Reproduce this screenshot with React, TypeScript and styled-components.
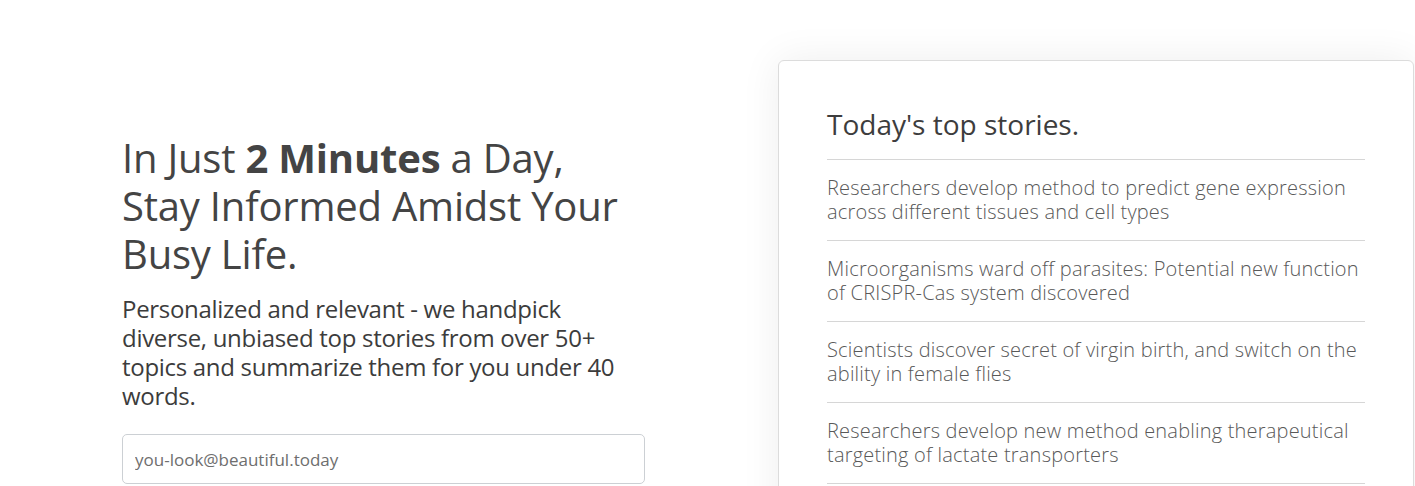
import React from 'react';
import styled, { createGlobalStyle } from 'styled-components';

const GlobalStyle = createGlobalStyle`
  html, body {
    margin: 0;
    padding: 0;
    background: #fff;
    font-family: 'Open Sans', 'Lato', sans-serif;
    color: #444;
  }
  * {
    box-sizing: border-box;
  }
`;

const Page = styled.div`
  display: flex;
  align-items: flex-start;
  gap: 133px;
  padding: 60px 0 0 122px;
  height: 486px;
  overflow: hidden;
`;

const Intro = styled.div`
  width: 523px;
  padding-top: 74px;
`;

const Headline = styled.h1`
  margin: 0;
  font-size: 40px;
  line-height: 48px;
  font-weight: 400;
  letter-spacing: -0.2px;
  color: #444;

  b {
    font-weight: 700;
  }
`;

const Lead = styled.p`
  margin: 16px 0 0;
  font-size: 24px;
  line-height: 29px;
  font-weight: 500;
  letter-spacing: -0.3px;
  color: #3c3c3c;
`;

const EmailInput = styled.input`
  display: block;
  width: 100%;
  height: 50px;
  margin-top: 24px;
  padding: 0 12px;
  border: 1px solid #ccd0d4;
  border-radius: 5px;
  font-family: 'Open Sans', sans-serif;
  font-size: 17px;
  color: #444;
  outline: none;

  &::placeholder {
    color: #6e6e6e;
  }
`;

const StoriesCard = styled.section`
  width: 636px;
  min-height: 520px;
  padding: 47px 48px 0;
  background: #fff;
  border: 1px solid #dcdcdc;
  border-radius: 6px;
  box-shadow: 0 0 40px rgba(0, 0, 0, 0.07);
`;

const CardTitle = styled.h2`
  margin: 0;
  padding-bottom: 17px;
  font-size: 28px;
  line-height: 33.6px;
  font-weight: 400;
  color: #3d3d3d;
  border-bottom: 1px solid #d6d6d6;
`;

const StoryList = styled.ul`
  list-style: none;
  margin: 0;
  padding: 0;
`;

const Story = styled.li`
  padding: 16px 0;
  font-size: 20px;
  line-height: 24px;
  font-weight: 300;
  letter-spacing: 0.2px;
  color: #595959;
  border-bottom: 1px solid #d6d6d6;
`;

const stories = [
  'Researchers develop method to predict gene expression across different tissues and cell types',
  'Microorganisms ward off parasites: Potential new function of CRISPR-Cas system discovered',
  'Scientists discover secret of virgin birth, and switch on the ability in female flies',
  'Researchers develop new method enabling therapeutical targeting of lactate transporters',
];

const App: React.FC = () => {
  return (
    <>
      <GlobalStyle />
      <Page>
        <Intro>
          <Headline>
            In Just <b>2 Minutes</b> a Day,
            <br />
            Stay Informed Amidst Your
            <br />
            Busy Life.
          </Headline>
          <Lead>
            Personalized and relevant - we handpick diverse, unbiased top stories from over 50+
            topics and summarize them for you under 40 words.
          </Lead>
          <EmailInput type="email" placeholder="you-look@beautiful.today" />
        </Intro>
        <StoriesCard>
          <CardTitle>Today's top stories.</CardTitle>
          <StoryList>
            {stories.map((s) => (
              <Story key={s}>{s}</Story>
            ))}
          </StoryList>
        </StoriesCard>
      </Page>
    </>
  );
};

export default App;
